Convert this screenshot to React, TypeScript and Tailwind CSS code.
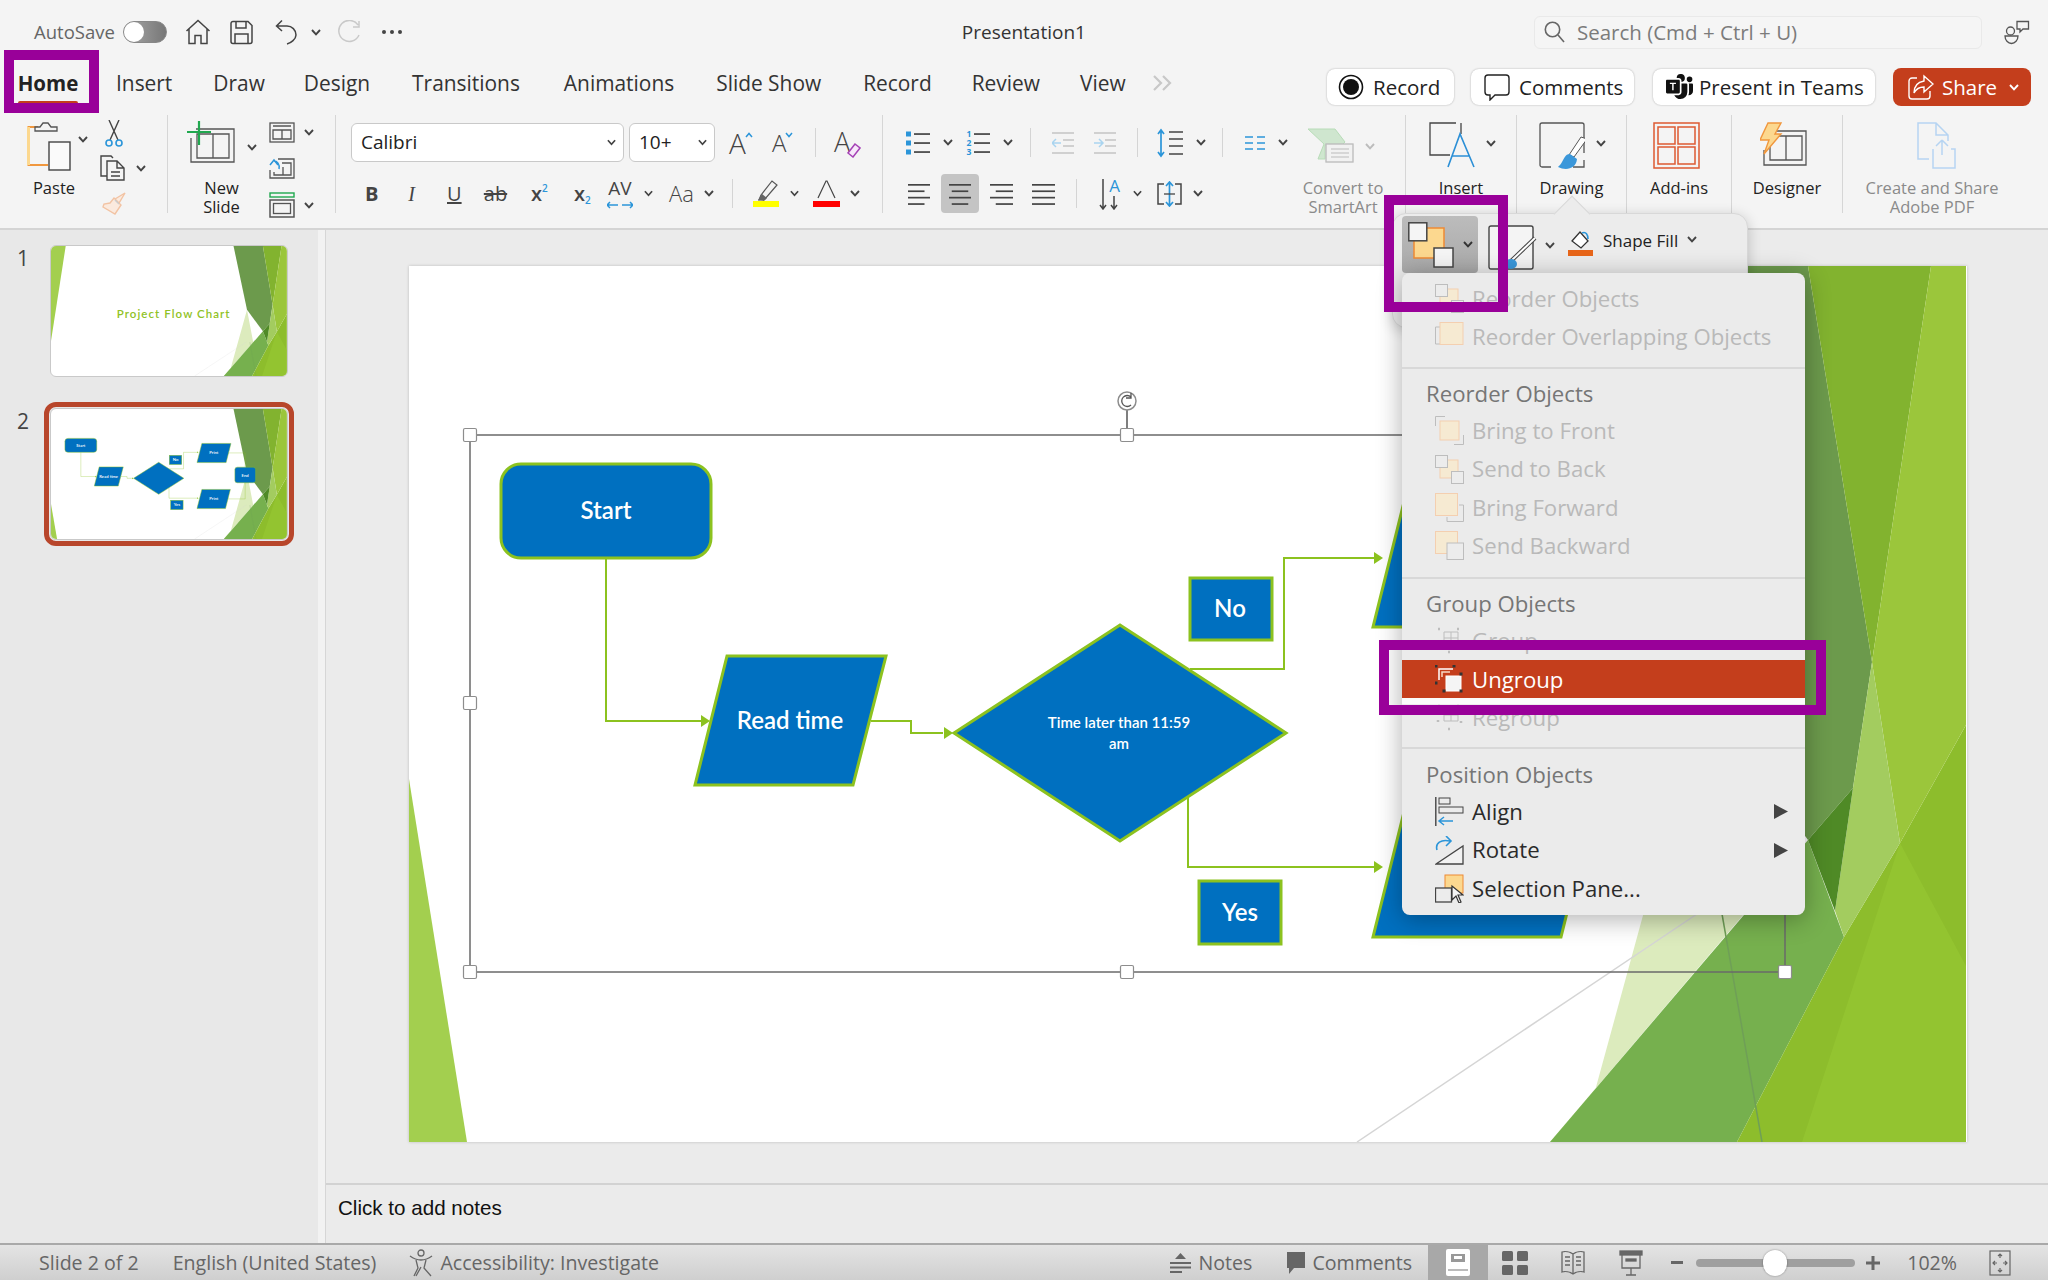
import type { ReactNode } from 'react'
import { BsMicrosoftTeams } from 'react-icons/bs'

const INK = '#444'
const BLUE = '#2b95d9'
const ORANGE = '#f0973e'
const PEACH = '#fcd88f'

// ─── Small shared bits ────────────────────────────────────────────────────────

function Chev({ color = '#444', w = 10 }: { color?: string; w?: number }) {
  return (
    <svg width={w} height="7" viewBox="0 0 10 7" className="shrink-0">
      <path d="M1 1l4 4.4L9 1" fill="none" stroke={color} strokeWidth="1.9" />
    </svg>
  )
}

function RowDiv() {
  return <div className="w-px h-[29px] bg-[#d4d4d4] shrink-0" />
}

function GroupDiv() {
  return <div className="w-px h-[98px] mt-[3px] bg-[#d6d6d6] shrink-0" />
}

function Lines({ w = 22, rows, align = 'l' }: { w?: number; rows: number[]; align?: 'l' | 'c' | 'r' }) {
  return (
    <svg width={w} height="24" viewBox={`0 0 ${w} 24`} className="shrink-0">
      {rows.map((len, i) => {
        const l = len * w
        const x = align === 'l' ? 0 : align === 'r' ? w - l : (w - l) / 2
        return <rect key={i} x={x} y={2 + i * 6.4} width={l} height="1.7" fill="#444" />
      })}
    </svg>
  )
}

// ─── Title bar ────────────────────────────────────────────────────────────────

function TitleBar() {
  return (
    <div className="relative h-[50px] pt-[14px] flex items-center shrink-0">
      <span className="ml-[34px] text-[18.5px] text-[#666]">AutoSave</span>
      <div className="ml-[8px] w-[44px] h-[22px] rounded-full bg-linear-to-r from-[#aaa] to-[#777] border border-[#888] flex items-center">
        <div className="w-[20px] h-[20px] rounded-full bg-white" />
      </div>
      <svg width="26" height="26" viewBox="0 0 26 26" className="ml-[18px]" fill="none" stroke={INK} strokeWidth="1.5">
        <path d="M1.5 12L13 1.5 24.5 12M4 10v14.5h6v-8h6v8h6V10" />
      </svg>
      <svg width="23" height="25" viewBox="0 0 23 25" className="ml-[19px]" fill="none" stroke={INK} strokeWidth="1.5">
        <path d="M1 3.5a2 2 0 012-2h15l4 4v16a2 2 0 01-2 2H3a2 2 0 01-2-2zM6 2v6h10V2M5 23v-9h13v9" />
      </svg>
      <svg width="23" height="26" viewBox="0 0 23 26" className="ml-[22px]" fill="none" stroke={INK} strokeWidth="1.5">
        <path d="M7 1.5L1.5 7 7 12M2 7h10a9 9 0 019 9c0 4-5 8-9 9" />
      </svg>
      <div className="ml-[13px]"><Chev /></div>
      <svg width="23" height="25" viewBox="0 0 23 25" className="ml-[17px]" fill="none" stroke="#c9c9c9" strokeWidth="1.5">
        <path d="M20 5A10.5 10.5 0 1021 15M21 1v6h-6" />
      </svg>
      <div className="ml-[21px] flex gap-[4px]">
        <i className="w-[4px] h-[4px] rounded-full bg-[#444]" />
        <i className="w-[4px] h-[4px] rounded-full bg-[#444]" />
        <i className="w-[4px] h-[4px] rounded-full bg-[#444]" />
      </div>
      <span className="ml-[560px] text-[19px] text-[#333]">Presentation1</span>
      <div className="ml-[448px] w-[448px] h-[33px] rounded-[6px] border border-[#e9e9e9] bg-[#f5f5f5] flex items-center pl-[9px]">
        <svg width="21" height="22" viewBox="0 0 21 22" fill="none" stroke="#666" strokeWidth="1.6">
          <circle cx="8.5" cy="8.5" r="7.2" />
          <path d="M14 14l6 7" />
        </svg>
        <span className="ml-[12px] text-[20.5px] font-medium text-[#7b7b7b]">Search (Cmd + Ctrl + U)</span>
      </div>
      <svg width="26" height="25" viewBox="0 0 26 25" className="ml-[22px]" fill="none" stroke="#555" strokeWidth="1.3">
        <circle cx="6.5" cy="11" r="4" />
        <path d="M1 16h13c0 4-3 7.5-6.500 7.500S1 20 1 16zM13 1.500h11.500v7.500H19l-3 3V9h-3z" />
      </svg>
    </div>
  )
}

// ─── Tabs ─────────────────────────────────────────────────────────────────────

const TABS: [string, string][] = [
  ['Insert', 'ml-[38px]'],
  ['Draw', 'ml-[41px]'],
  ['Design', 'ml-[39px]'],
  ['Transitions', 'ml-[42px]'],
  ['Animations', 'ml-[44px]'],
  ['Slide Show', 'ml-[42px]'],
  ['Record', 'ml-[42px]'],
  ['Review', 'ml-[40px]'],
  ['View', 'ml-[40px]'],
]

function Pill({ cls, children }: { cls: string; children: ReactNode }) {
  return (
    <div className={`h-[36px] rounded-[8px] bg-white shadow-[0_0_2px_rgba(0,0,0,0.3)] flex items-center text-[20.5px] text-[#222] shrink-0 ${cls}`}>
      {children}
    </div>
  )
}

function TabRow() {
  return (
    <div className="h-[62px] flex items-start shrink-0">
      <div className="ml-[18px] w-[60px] h-[56px] flex flex-col items-center relative">
        <span className="mt-[20px] text-[20.5px] leading-[26px] font-bold text-[#222]">Home</span>
        <div className="absolute top-[51px] left-0 w-full h-[5px] rounded-t-[2px] bg-[#c43e1c]" />
      </div>
      {TABS.map(([t, m]) => (
        <span key={t} className={`${m} mt-[20px] text-[20.9px] leading-[26px] text-[#333]`}>{t}</span>
      ))}
      <svg width="20" height="16" viewBox="0 0 20 16" className="ml-[26px] mt-[25px]" fill="none" stroke="#c8c8c8" strokeWidth="2.2">
        <path d="M2 1l7 7-7 7M11 1l7 7-7 7" />
      </svg>
      <div className="ml-auto mr-[17px] mt-[18px] flex items-center">
        <Pill cls="w-[127px] pl-[11px]">
          <svg width="26" height="26" viewBox="0 0 26 26"><circle cx="13" cy="13" r="11.500" fill="none" stroke="#111" strokeWidth="1.6" /><circle cx="13" cy="13" r="8" fill="#111" /></svg>
          <span className="ml-[9px]">Record</span>
        </Pill>
        <Pill cls="ml-[17px] w-[163px] pl-[13px]">
          <svg width="26" height="28" viewBox="0 0 26 28" fill="none" stroke="#222" strokeWidth="1.4"><path d="M4 2h18a3 3 0 013 3v14a3 3 0 01-3 3H11l-5 5v-5H4a3 3 0 01-3-3V5a3 3 0 013-3z" /></svg>
          <span className="ml-[9px]">Comments</span>
        </Pill>
        <Pill cls="ml-[19px] w-[222px] pl-[13px]">
          <BsMicrosoftTeams size={27} color="#111" />
          <span className="ml-[6px]">Present in Teams</span>
        </Pill>
        <div className="ml-[18px] w-[138px] h-[38px] rounded-[8px] bg-[#c43e1c] flex items-center pl-[15px] text-white text-[20.5px] font-medium">
          <svg width="26" height="26" viewBox="0 0 26 26" fill="none" stroke="#fff" strokeWidth="1.4">
            <path d="M9 4H4a3 3 0 00-3 3v15a3 3 0 003 3h15a3 3 0 003-3v-5M16 2l9 8-9 8v-5c-5 0-8 2-10 6 0-7 4-11 10-12z" />
          </svg>
          <span className="ml-[8px]">Share</span>
          <span className="ml-[11px]"><Chev color="#fff" w={12} /></span>
        </div>
      </div>
    </div>
  )
}

// ─── Ribbon icons ─────────────────────────────────────────────────────────────

function PasteIcon() {
  return (
    <svg width="44" height="50" viewBox="0 0 44 50" fill="none" className="shrink-0">
      <path d="M11 5H1.500v38H21" stroke={ORANGE} strokeWidth="2" />
      <path d="M1.500 5v38" stroke={PEACH} strokeWidth="3" />
      <path d="M8 9V5h5l3-4 5 0 3 4h6v4z" fill="#f4f4f4" stroke="#555" strokeWidth="1.3" />
      <rect x="22" y="20" width="21" height="28" fill="#fafafa" stroke="#444" strokeWidth="1.4" />
    </svg>
  )
}

function CutIcon() {
  return (
    <svg width="18" height="27" viewBox="0 0 18 27" fill="none" className="shrink-0">
      <path d="M4 0l9 20M14 0L5 20" stroke="#444" strokeWidth="1.4" />
      <circle cx="4" cy="23" r="3" stroke={BLUE} strokeWidth="1.6" />
      <circle cx="14" cy="23" r="3" stroke={BLUE} strokeWidth="1.6" />
    </svg>
  )
}

function CopyIcon() {
  return (
    <svg width="25" height="26" viewBox="0 0 25 26" fill="none" stroke="#444" strokeWidth="1.4" className="shrink-0">
      <path d="M7 21H1V1h10l2 2" />
      <path d="M7 6h10l7 7v12H7zM17 6v7h7M11 17h9M11 21h9" />
    </svg>
  )
}

function BrushIcon() {
  return (
    <svg width="25" height="23" viewBox="0 0 25 23" fill="none" stroke="#f2c3a3" strokeWidth="1.4" className="shrink-0">
      <path d="M14 7L24 1l-6 10zM13 6l7 7-6 9-12-7 1-3 6-1z" fill="#fbeade" />
      <path d="M18 12l-4-4" stroke="#ccc" />
    </svg>
  )
}

function NewSlideIcon() {
  return (
    <svg width="48" height="44" viewBox="0 0 48 44" fill="none" className="shrink-0">
      <path d="M9 9h38v33H4V18M10 14h32v24H10zM26 14v24" stroke="#555" strokeWidth="1.300" />
      <path d="M12 1v24M0 12h24" stroke="#20a84f" strokeWidth="2.200" />
    </svg>
  )
}

function LayoutIcon() {
  return (
    <svg width="26" height="21" viewBox="0 0 26 21" fill="none" stroke="#555" strokeWidth="1.3" className="shrink-0">
      <rect x="1" y="1" width="24" height="19" />
      <path d="M4 4h18M4 8h18v9H4zM13 8v9" />
    </svg>
  )
}

function ResetIcon() {
  return (
    <svg width="26" height="21" viewBox="0 0 26 21" fill="none" stroke="#555" strokeWidth="1.3" className="shrink-0">
      <path d="M9 1h16v19H1v-8M13 5h9v12H5v-3M14 9v8" />
      <path d="M1 7l4-5 4 5M5 3c3 0 6 3 5 8" stroke={BLUE} strokeWidth="1.500" />
    </svg>
  )
}

function SectionIcon() {
  return (
    <svg width="26" height="26" viewBox="0 0 26 26" fill="none" className="shrink-0">
      <rect x="1" y="1" width="24" height="4" stroke="#20a84f" strokeWidth="1.400" />
      <rect x="1" y="8" width="24" height="17" stroke="#555" strokeWidth="1.500" />
      <rect x="4.500" y="11.500" width="17" height="10" stroke="#555" strokeWidth="1.300" />
    </svg>
  )
}

function FontAInc({ up }: { up: boolean }) {
  return (
    <div className={`flex items-start font-light text-[#444] shrink-0 ${up ? 'w-[26px] text-[28px]' : 'w-[25px] text-[24px]'} leading-[30px]`}>
      <span>A</span>
      <svg width="8" height="6" viewBox="0 0 8 6" className="mt-[4px] -ml-[1px]" fill="none" stroke={BLUE} strokeWidth="1.500">
        <path d={up ? 'M1 5l3-3.500L7 5' : 'M1 1l3 3.500L7 1'} />
      </svg>
    </div>
  )
}

function ClearIcon() {
  return (
    <div className="relative w-[27px] h-[30px] shrink-0">
      <span className="absolute left-0 top-0 text-[27px] leading-[28px] font-light text-[#444]">A</span>
      <svg width="15" height="15" viewBox="0 0 15 15" className="absolute right-0 bottom-0" fill="none" stroke="#a542b6" strokeWidth="1.500">
        <path d="M9 1l5 4-7 9-5-4z" fill="#f7e8fa" />
      </svg>
    </div>
  )
}

function BulletIcon({ numbered }: { numbered?: boolean }) {
  return (
    <svg width="24" height="30" viewBox="0 0 24 30" className="shrink-0">
      {[6, 15, 24].map((y, i) => (
        <g key={y}>
          {numbered ? (
            <text x="0.500" y={y + 3} fontSize="8.500" fontWeight="700" fill={BLUE} fontFamily="Open Sans, sans-serif">{i + 1}</text>
          ) : (
            <rect x="0" y={y - 2.500} width="5" height="5" fill={BLUE} />
          )}
          <rect x="8" y={y - 0.800} width="16" height="1.700" fill="#444" />
        </g>
      ))}
    </svg>
  )
}

function IndentIcon({ inc }: { inc?: boolean }) {
  return (
    <svg width="22" height="24" viewBox="0 0 22 24" fill="none" className="shrink-0">
      <path d="M0 2h22M11 9h11M11 15h11M0 22h22" stroke="#c3c3c3" strokeWidth="1.700" />
      <path d={inc ? 'M0 12h9M5 8l4 4-4 4' : 'M9 12H0M4 8l-4 4 4 4'} stroke="#a9d4ef" strokeWidth="1.500" />
    </svg>
  )
}

function LineSpacingIcon() {
  return (
    <svg width="26" height="30" viewBox="0 0 26 30" fill="none" className="shrink-0">
      <path d="M4 2v26M1 6l3-4 3 4M1 24l3 4 3-4" stroke={BLUE} strokeWidth="1.700" />
      <path d="M12 4h14M12 11h14M12 18h14M12 26h14" stroke="#444" strokeWidth="1.700" />
    </svg>
  )
}

function ColumnsIcon() {
  return (
    <svg width="20" height="14" viewBox="0 0 20 14" className="shrink-0" stroke={BLUE} strokeWidth="1.700">
      <path d="M0 1h8M12 1h8M0 7h8M12 7h8M0 13h8M12 13h8" />
    </svg>
  )
}

function SmartArtIcon() {
  return (
    <svg width="46" height="35" viewBox="0 0 46 35" fill="none" className="shrink-0">
      <path d="M0 1h27l10 13-3 3H17v14H10l6-15z" fill="#cfe6cf" stroke="#b8dcb8" strokeWidth="1" />
      <rect x="18" y="16" width="27" height="18" fill="#f1f1f1" stroke="#bbb" strokeWidth="1.300" />
      <path d="M23 21h18M23 25h18M23 29h18" stroke="#bbb" strokeWidth="1" />
    </svg>
  )
}

function TextDirIcon() {
  return (
    <div className="relative w-[21px] h-[32px] shrink-0">
      <span className="absolute right-0 -top-[3px] text-[17px] leading-[22px] text-[#2b95d9]">A</span>
      <svg width="21" height="32" viewBox="0 0 21 32" fill="none" stroke="#444" strokeWidth="1.500" className="absolute inset-0">
        <path d="M4 1v30M1 27l3 4 3-4M15 18v13M12 27l3 4 3-4" />
      </svg>
    </div>
  )
}

function VAlignIcon() {
  return (
    <svg width="25" height="26" viewBox="0 0 25 26" fill="none" className="shrink-0">
      <path d="M7 3H1v20h6M18 3h6v20h-6" stroke="#444" strokeWidth="1.500" />
      <path d="M12.500 1v24M9 5l3.500-4L16 5M9 21l3.500 4L16 21" stroke={BLUE} strokeWidth="1.700" />
      <path d="M7 13h11" stroke="#444" strokeWidth="1.300" />
    </svg>
  )
}

function InsertIcon() {
  return (
    <svg width="46" height="46" viewBox="0 0 46 46" fill="none" className="shrink-0">
      <path d="M27 1H1v32h20M32 1v11" stroke="#444" strokeWidth="1.300" />
      <path d="M19 45l12-33 14 33M23 34h18" stroke="#2b8fd6" strokeWidth="1.600" />
    </svg>
  )
}

function DrawingIcon() {
  return (
    <svg width="46" height="50" viewBox="0 0 46 50" fill="none" className="shrink-0">
      <path d="M12 45H3a2 2 0 01-2-2V3a2 2 0 012-2h40a2 2 0 012 2v28M45 38v7H34" stroke="#555" strokeWidth="1.300" />
      <path d="M35 35L48 17 42 15 30 33z" fill="#fff" stroke="#555" strokeWidth="1" />
      <path d="M31 32c-5 0-6 5-8 8-1 2-3 4-4 5 8 4 18 2 19-8z" fill="#3a97da" />
    </svg>
  )
}

function AddInsIcon() {
  return (
    <svg width="47" height="47" viewBox="0 0 47 47" fill="none" stroke="#dd5a32" strokeWidth="1.500" className="shrink-0">
      <rect x="1" y="1" width="45" height="45" />
      <rect x="5" y="5" width="17" height="17" />
      <rect x="25" y="5" width="17" height="17" />
      <rect x="5" y="25" width="17" height="17" />
      <rect x="25" y="25" width="17" height="17" />
    </svg>
  )
}

function DesignerIcon() {
  return (
    <svg width="47" height="44" viewBox="0 0 47 44" fill="none" className="shrink-0">
      <path d="M14 9h32v34H4V28M10 14h32v24H10zM12 14h30M26 14v24" stroke="#555" strokeWidth="1.300" />
      <path d="M8 1h13l-6 11h6L4 32l5-14H0z" fill={PEACH} stroke={ORANGE} strokeWidth="1.400" />
    </svg>
  )
}

function AdobeIcon() {
  return (
    <svg width="39" height="47" viewBox="0 0 39 47" fill="none" stroke="#b6d4f2" strokeWidth="1.500" className="shrink-0">
      <path d="M12 37H1V1h18l12 12v6M19 1v12h12M25 18l-6 6M25 18l6 6M25 18v15M16 27v19h22V27h-4" />
    </svg>
  )
}

function LabelledIcon({ w, pad, icon, chev, label, gray }: { w: string; pad: string; icon: ReactNode; chev?: string; label: string[]; gray?: boolean }) {
  return (
    <div className={`${w} flex flex-col shrink-0`}>
      <div className={`h-[56px] flex items-start ${pad}`}>
        {icon}
        {chev && <span className={chev}><Chev /></span>}
      </div>
      <div className={`text-center text-[16.5px] leading-[19px] ${gray ? 'text-[#8a8a8a]' : 'text-[#222]'}`}>
        {label.map(l => <div key={l}>{l}</div>)}
      </div>
    </div>
  )
}

// ─── Ribbon ───────────────────────────────────────────────────────────────────

function FontRows() {
  return (
    <div className="w-[546px] shrink-0 flex flex-col">
      <div className="h-[39px] flex items-center">
        <div className="ml-[15px] w-[273px] h-[39px] rounded-[6px] bg-white border border-[#c9c9c9] flex items-center pl-[9px] pr-[7px] text-[19px] text-[#222]">
          <span className="flex-1">Calibri</span>
          <Chev w={9} />
        </div>
        <div className="ml-[5px] w-[86px] h-[39px] rounded-[6px] bg-white border border-[#c9c9c9] flex items-center pl-[9px] pr-[7px] text-[19px] text-[#222]">
          <span className="flex-1">10+</span>
          <Chev w={9} />
        </div>
        <div className="ml-[14px]"><FontAInc up /></div>
        <div className="ml-[17px]"><FontAInc up={false} /></div>
        <div className="ml-[18px]"><RowDiv /></div>
        <div className="ml-[18px]"><ClearIcon /></div>
      </div>
      <div className="h-[39px] mt-[12px] flex items-center text-[#444]">
        <span className="ml-[29px] w-[11px] text-center text-[20px] font-bold">B</span>
        <span className="ml-[31px] w-[9px] text-center text-[20px] italic font-['Liberation_Serif',serif]">I</span>
        <span className="ml-[31px] w-[12px] text-center text-[20px] underline">U</span>
        <span className="ml-[24px] w-[25px] text-center text-[20px] line-through">ab</span>
        <span className="ml-[23px] w-[17px] text-[20px] font-semibold">x<sup className="text-[10px] text-[#2b95d9] -top-[9px]">2</sup></span>
        <span className="ml-[26px] w-[17px] text-[20px] font-semibold">x<sub className="text-[10px] text-[#2b95d9] -bottom-[3px]">2</sub></span>
        <div className="ml-[16px] w-[26px] h-[30px] relative shrink-0">
          <span className="absolute left-0 -top-[3px] text-[19px] leading-[24px] w-full text-center">AV</span>
          <svg width="26" height="8" viewBox="0 0 26 8" className="absolute left-0 bottom-0" fill="none" stroke={BLUE} strokeWidth="1.500"><path d="M0 4h11M3 1L0 4l3 3M15 4h11M23 1l3 3-3 3" /></svg>
        </div>
        <div className="ml-[11px]"><Chev w={9} /></div>
        <span className="ml-[16px] w-[26px] text-[22px] font-light">Aa</span>
        <div className="ml-[9px]"><Chev /></div>
        <div className="ml-[18px]"><RowDiv /></div>
        <svg width="26" height="27" viewBox="0 0 26 27" fill="none" className="ml-[20px] shrink-0">
          <path d="M8 15L19 1l5 4-12 14-6 1z" stroke="#555" strokeWidth="1.200" fill="#f4f4f4" />
          <path d="M5 20l4-6 5 4-3 3z" fill="#666" />
          <rect x="0" y="21" width="26" height="6" fill="#ffff00" />
        </svg>
        <div className="ml-[11px]"><Chev w={9} /></div>
        <svg width="27" height="27" viewBox="0 0 27 27" fill="none" className="ml-[14px] shrink-0">
          <path d="M5 18L13 1l1 0 8 17" stroke="#444" strokeWidth="1.200" />
          <rect x="0" y="21" width="27" height="6" fill="#ff0000" />
        </svg>
        <div className="ml-[10px]"><Chev /></div>
      </div>
    </div>
  )
}

function ParagraphRows() {
  return (
    <div className="w-[417px] shrink-0 flex flex-col">
      <div className="h-[39px] flex items-center">
        <div className="ml-[23px]"><BulletIcon /></div>
        <div className="ml-[13px]"><Chev /></div>
        <div className="ml-[13px]"><BulletIcon numbered /></div>
        <div className="ml-[13px]"><Chev /></div>
        <div className="ml-[17px]"><RowDiv /></div>
        <div className="ml-[21px]"><IndentIcon /></div>
        <div className="ml-[20px]"><IndentIcon inc /></div>
        <div className="ml-[21px]"><RowDiv /></div>
        <div className="ml-[19px]"><LineSpacingIcon /></div>
        <div className="ml-[13px]"><Chev /></div>
        <div className="ml-[16px]"><RowDiv /></div>
        <div className="ml-[22px]"><ColumnsIcon /></div>
        <div className="ml-[13px]"><Chev /></div>
      </div>
      <div className="h-[39px] mt-[12px] flex items-center">
        <div className="ml-[25px]"><Lines rows={[1, 0.75, 1, 0.75]} /></div>
        <div className="ml-[11px] w-[38px] h-[39px] rounded-[4px] bg-[#c4c4c4] flex items-center justify-center"><Lines rows={[1, 0.75, 1, 0.75]} align="c" /></div>
        <div className="ml-[11px]"><Lines w={23} rows={[1, 0.75, 1, 0.75]} align="r" /></div>
        <div className="ml-[19px]"><Lines w={23} rows={[1, 1, 1, 1]} /></div>
        <div className="ml-[21px]"><RowDiv /></div>
        <div className="ml-[22px]"><TextDirIcon /></div>
        <div className="ml-[13px]"><Chev w={9} /></div>
        <div className="ml-[15px]"><VAlignIcon /></div>
        <div className="ml-[11px]"><Chev /></div>
      </div>
    </div>
  )
}

function Ribbon() {
  return (
    <div className="h-[118px] border-b-2 border-[#d4d4d4] flex shrink-0">
      {/* clipboard */}
      <div className="w-[167px] flex shrink-0">
        <div className="w-[88px] shrink-0 flex flex-col">
          <div className="h-[66px] pt-[10px] pl-[27px] flex items-start">
            <PasteIcon />
            <span className="ml-[7px] mt-[14px]"><Chev /></span>
          </div>
          <div className="text-center text-[16.5px] leading-[19px] text-[#222] pl-[20px]">Paste</div>
        </div>
        <div className="flex flex-col pt-[8px]">
          <div className="ml-[17px]"><CutIcon /></div>
          <div className="mt-[8px] ml-[12px] flex items-center">
            <CopyIcon />
            <span className="ml-[11px]"><Chev /></span>
          </div>
          <div className="mt-[11px] ml-[13px]"><BrushIcon /></div>
        </div>
      </div>
      <GroupDiv />
      {/* slides */}
      <div className="w-[167px] flex shrink-0">
        <div className="ml-[19px] w-[69px] shrink-0 flex flex-col">
          <div className="h-[66px] pt-[8px] flex items-start">
            <NewSlideIcon />
            <span className="ml-[12px] mt-[24px]"><Chev /></span>
          </div>
          <div className="text-center text-[16.5px] leading-[19px] text-[#222]">New<br />Slide</div>
        </div>
        <div className="ml-[13px] flex flex-col pt-[10px]">
          <div className="flex items-center"><LayoutIcon /><span className="ml-[9px]"><Chev /></span></div>
          <div className="mt-[15px]"><ResetIcon /></div>
          <div className="mt-[13px] flex items-center"><SectionIcon /><span className="ml-[9px]"><Chev /></span></div>
        </div>
      </div>
      <GroupDiv />
      {/* font + paragraph */}
      <div className="flex flex-col pt-[11px]"><FontRows /></div>
      <GroupDiv />
      <div className="flex flex-col pt-[11px]"><ParagraphRows /></div>
      <div className="w-[105px] shrink-0 flex flex-col pt-[16px]">
        <div className="h-[50px] pl-[8px] flex items-start">
          <SmartArtIcon />
          <span className="ml-[11px] mt-[15px]"><Chev color="#bcbcbc" /></span>
        </div>
        <div className="w-[86px] text-center text-[16.5px] leading-[19px] text-[#8a8a8a]">Convert to<br />SmartArt</div>
      </div>
      <GroupDiv />
      <div className="pt-[10px]">
        <LabelledIcon w="w-[110px]" pad="pl-[23px]" icon={<InsertIcon />} chev="ml-[11px] mt-[18px]" label={['Insert']} />
      </div>
      <GroupDiv />
      <div className="pt-[10px]">
        <LabelledIcon w="w-[109px]" pad="pl-[22px]" icon={<DrawingIcon />} chev="ml-[11px] mt-[18px]" label={['Drawing']} />
      </div>
      <GroupDiv />
      <div className="pt-[10px]">
        <LabelledIcon w="w-[104px]" pad="pl-[26px]" icon={<AddInsIcon />} label={['Add-ins']} />
      </div>
      <GroupDiv />
      <div className="pt-[10px]">
        <LabelledIcon w="w-[110px]" pad="pl-[28px]" icon={<DesignerIcon />} label={['Designer']} />
      </div>
      <GroupDiv />
      <div className="pt-[10px]">
        <LabelledIcon w="w-[178px]" pad="pl-[74px]" icon={<AdobeIcon />} label={['Create and Share', 'Adobe PDF']} gray />
      </div>
    </div>
  )
}

// ─── Slide art ────────────────────────────────────────────────────────────────

function SlideArt() {
  return (
    <>
      <polygon points="1294,430 1172,876 1141,876 1335,648" fill="#dcebbd" />
      <polygon points="1205,0 1399,0 1463,396 1444,522 1399,574 1294,430" fill="#6c9a4c" />
      <polygon points="1141,876 1399,574 1435,671 1328,876" fill="#76b04e" />
      <polygon points="1328,876 1435,671 1491,577 1557,459 1557,876" fill="#8dbd2c" />
      <polygon points="1393,876 1491,577 1557,700 1557,876" fill="#97c834" opacity="0.6" />
      <polygon points="1399,0 1522,0 1463,396" fill="#82b32f" />
      <polygon points="1522,0 1557,0 1557,459 1491,577 1463,396" fill="#9bc63b" />
      <polygon points="1463,396 1491,577 1435,671 1426,645 1444,522" fill="#a3cc5f" />
      <polygon points="1444,522 1399,574 1426,645" fill="#4f8a26" />
      <line x1="948" y1="876" x2="1288" y2="648" stroke="#d5d5d5" strokeWidth="1.500" />
      <line x1="1313" y1="648" x2="1353" y2="876" stroke="#6f9f57" strokeWidth="1.500" />
    </>
  )
}

const FLOW_STROKE = '#8cc21f'

function Arrow({ x, y }: { x: number; y: number }) {
  return <polygon points={`${x - 9},${y - 6} ${x},${y} ${x - 9},${y + 6}`} fill={FLOW_STROKE} />
}

function FlowShapes() {
  const shape = { fill: '#0070c0', stroke: FLOW_STROKE, strokeWidth: 3 }
  const wire = { fill: 'none', stroke: FLOW_STROKE, strokeWidth: 2 }
  return (
    <>
      <path d="M197 292V455H292" {...wire} />
      <Arrow x={301} y={455} />
      <path d="M462 455H502V467H534" {...wire} />
      <Arrow x={544} y={467} />
      <path d="M781 403H875V292H965" {...wire} />
      <Arrow x={974} y={292} />
      <path d="M779 531V601H965" {...wire} />
      <Arrow x={974} y={601} />
      <path d="M1160 296H1282V392M1150 606H1282V497" {...wire} />
      <rect x="92" y="198" width="210" height="94" rx="20" {...shape} />
      <polygon points="318,390 477,390 444,519 286,519" {...shape} />
      <polygon points="545,467 711,359 877,467 711,575" {...shape} />
      <rect x="781" y="312" width="82" height="62" {...shape} />
      <rect x="790" y="615" width="82" height="63" {...shape} />
      <polygon points="996,232 1188,232 1156,361 964,361" {...shape} />
      <polygon points="996,542 1184,542 1152,671 964,671" {...shape} />
      <rect x="1214" y="392" width="137" height="105" rx="16" {...shape} />
    </>
  )
}

function Thumb({ second }: { second?: boolean }) {
  return (
    <svg viewBox="0 0 1558 876" preserveAspectRatio="none" className="block w-[238px] h-[132px] rounded-[6px] bg-white border border-[#c9c9c9]">
      {second ? (
        <polygon points="0,640 40,876 0,876" fill="#a3cf4f" />
      ) : (
        <polygon points="0,0 97,0 0,640" fill="#a3cf4f" />
      )}
      <SlideArt />
      {second ? (
        <>
          <FlowShapes />
          {[
            ['Start', 197, 255], ['Read time', 381, 465], ['No', 822, 353], ['Yes', 831, 657],
            ['Print', 1075, 305], ['Print', 1075, 615], ['End', 1282, 455],
          ].map(([t, x, y], i) => (
            <text key={i} x={x} y={y} fontSize="28" fontWeight="600" fill="#fff" textAnchor="middle" fontFamily="Lato, sans-serif">{t}</text>
          ))}
        </>
      ) : (
        <text x="434" y="485" fontSize="76" fontWeight="600" fill="#90c226" textLength="745" fontFamily="Lato, sans-serif">Project Flow Chart</text>
      )}
    </svg>
  )
}

function Handle({ x, y }: { x: number; y: number }) {
  return <rect x={x - 6.500} y={y - 6.500} width="13" height="13" rx="1.500" fill="#fff" stroke="#8d8d8d" strokeWidth="1.200" />
}

function FlowLabel({ cls, children }: { cls: string; children: ReactNode }) {
  return (
    <span className={`absolute -translate-x-1/2 -translate-y-1/2 text-white font-['Lato',sans-serif] font-semibold whitespace-nowrap text-center ${cls}`}>
      {children}
    </span>
  )
}

function Slide() {
  return (
    <div className="relative w-[1558px] h-[876px] bg-white shadow-[0_0_3px_rgba(0,0,0,0.2)] overflow-hidden">
      <svg viewBox="0 0 1558 876" className="absolute inset-0 w-full h-full">
        <polygon points="0,513 58,876 0,876" fill="#a3cf4f" />
        <SlideArt />
        <FlowShapes />
        <rect x="61" y="169" width="1315" height="537" fill="none" stroke="#6a6a6a" strokeWidth="1.500" />
        <path d="M718 169V144" stroke="#555" strokeWidth="1.500" />
        <circle cx="718" cy="135" r="9" fill="#fff" stroke="#8d8d8d" strokeWidth="1.500" />
        <path d="M722 131a5.500 5.500 0 100 8M722 127v5h-5" fill="none" stroke="#555" strokeWidth="1.300" />
        <Handle x={61} y={169} />
        <Handle x={718} y={169} />
        <Handle x={61} y={437} />
        <Handle x={61} y={706} />
        <Handle x={718} y={706} />
        <Handle x={1376} y={706} />
      </svg>
      <FlowLabel cls="left-[197px] top-[244px] text-[24px]">Start</FlowLabel>
      <FlowLabel cls="left-[381px] top-[454px] text-[24px]">Read time</FlowLabel>
      <FlowLabel cls="left-[710px] top-[467px] text-[15px] leading-[21px]">Time later than 11:59<br />am</FlowLabel>
      <FlowLabel cls="left-[821px] top-[342px] text-[24px]">No</FlowLabel>
      <FlowLabel cls="left-[831px] top-[646px] text-[24px]">Yes</FlowLabel>
    </div>
  )
}

// ─── Side panel, notes, status bar ────────────────────────────────────────────

function Sidebar() {
  return (
    <div className="w-[326px] flex shrink-0">
      <div className="w-[318px] bg-[#e8e8e8] pt-[15px]">
        <div className="flex">
          <span className="ml-[17px] w-[33px] text-[21px] leading-[26px] text-[#444]">1</span>
          <Thumb />
        </div>
        <div className="flex mt-[31px]">
          <span className="ml-[17px] w-[33px] text-[21px] leading-[26px] text-[#444]">2</span>
          <div className="rounded-[6px] outline-[5px] outline-offset-[1px] outline-solid outline-[#b8462b]">
            <Thumb second />
          </div>
        </div>
      </div>
      <div className="w-[7px] bg-[#f2f2f2]" />
      <div className="w-px bg-[#d6d6d6]" />
    </div>
  )
}

function StatusBar() {
  return (
    <div className="h-[37px] border-t-2 border-[#a9a9a9] bg-linear-to-b from-[#e4e4e4] to-[#cfcfcf] flex items-center text-[19.6px] text-[#666] font-['Open_Sans',sans-serif] shrink-0">
      <span className="ml-[39px]">Slide 2 of 2</span>
      <span className="ml-[34px]">English (United States)</span>
      <svg width="26" height="28" viewBox="0 0 26 28" fill="none" stroke="#666" strokeWidth="1.300" className="ml-[33px] shrink-0">
        <circle cx="12" cy="4" r="3" />
        <path d="M1 7c4 3 7 4 11 4s7-1 11-4M7 11l2 8-4 8M17 11l-2 8 7 8M12 18l-5 9" />
      </svg>
      <span className="ml-[5px]">Accessibility: Investigate</span>
      <svg width="21" height="22" viewBox="0 0 21 22" className="ml-auto shrink-0" fill="#666">
        <path d="M10.500 1L16 7H5z" />
        <rect y="10" width="21" height="2" />
        <rect y="14.500" width="21" height="2" />
        <rect y="19" width="12" height="2" />
      </svg>
      <span className="ml-[8px]">Notes</span>
      <svg width="20" height="24" viewBox="0 0 20 24" className="ml-[34px] shrink-0" fill="#666"><path d="M1 1h18v16H8l-5 6v-6H1z" /></svg>
      <span className="ml-[6px]">Comments</span>
      <div className="ml-[16px] w-[60px] h-[35px] bg-[#a8a8a8] flex items-center justify-center">
        <svg width="24" height="27" viewBox="0 0 24 27"><rect width="24" height="27" rx="2" fill="#fff" /><rect x="5" y="5" width="14" height="8" fill="#999" /><rect x="8" y="7" width="8" height="3" fill="#fff" /><rect x="2" y="20" width="20" height="2" fill="#bbb" /></svg>
      </div>
      <svg width="26" height="24" viewBox="0 0 26 24" className="ml-[14px] shrink-0" fill="#666">
        <rect width="11" height="10" rx="1.500" /><rect x="15" width="11" height="10" rx="1.500" /><rect y="14" width="11" height="10" rx="1.500" /><rect x="15" y="14" width="11" height="10" rx="1.500" />
      </svg>
      <svg width="24" height="26" viewBox="0 0 24 26" className="ml-[33px] shrink-0" fill="none" stroke="#666" strokeWidth="1.300">
        <path d="M12 4C9 2 4 1 1 2v20c3-1 8 0 11 2 3-2 8-3 11-2V2c-3-1-8 0-11 2zM12 4v20M4 7h5M4 11h5M4 15h5M15 7h5M15 11h5M15 15h5" />
      </svg>
      <svg width="24" height="26" viewBox="0 0 24 26" className="ml-[34px] shrink-0" fill="none" stroke="#666" strokeWidth="1.300">
        <rect x="1" y="1" width="22" height="4" fill="#666" />
        <path d="M3 5v13h18V5M12 18v7M7 25h10" />
        <rect x="7" y="9" width="10" height="2" fill="#666" />
      </svg>
      <span className="ml-[28px] w-[12px] h-[3px] bg-[#666] shrink-0" />
      <div className="ml-[13px] w-[159px] h-[8px] rounded-full bg-[#9f9f9f] relative shrink-0 flex items-center">
        <div className="ml-[67px] w-[24px] h-[26px] rounded-full bg-white shadow-[0_0_2px_rgba(0,0,0,0.4)]" />
      </div>
      <svg width="14" height="14" viewBox="0 0 14 14" className="ml-[11px] shrink-0" stroke="#666" strokeWidth="3"><path d="M0 7h14M7 0v14" /></svg>
      <span className="ml-[27px]">102%</span>
      <svg width="22" height="26" viewBox="0 0 22 26" className="ml-[32px] mr-[37px] shrink-0" fill="none" stroke="#666" strokeWidth="1.200">
        <rect x="1" y="1" width="20" height="24" />
        <path d="M11 4v4M9 6l2-2 2 2M11 18v4M9 20l2 2 2-2M4 13h4M6 11l-2 2 2 2M14 13h4M16 11l2 2-2 2" />
      </svg>
    </div>
  )
}

// ─── Drawing popover + arrange menu ───────────────────────────────────────────

function ArrangeIcon() {
  return (
    <svg width="46" height="46" viewBox="0 0 46 46" className="shrink-0">
      <rect x="6" y="6" width="30" height="30" fill="#fcd88f" stroke="#ee8a35" strokeWidth="1.500" />
      <rect x="0.800" y="0.800" width="18" height="18" fill="#f5f5f5" stroke="#444" strokeWidth="1.500" />
      <rect x="26" y="26" width="19" height="19" fill="#f5f5f5" stroke="#444" strokeWidth="1.500" />
    </svg>
  )
}

type MenuGlyph = 'reorder' | 'overlap' | 'front' | 'back' | 'forward' | 'backward' | 'group' | 'ungroup' | 'regroup' | 'align' | 'rotate' | 'pane'

const GR = '#bdbdbd'
const PE = '#f6ead2'
const PS = '#f4cfb0'

function MenuIcon({ kind }: { kind: MenuGlyph }) {
  let body: ReactNode = null
  if (kind === 'reorder' || kind === 'back') {
    body = (
      <>
        <rect x="5" y="5" width="18" height="18" fill={PE} stroke={PS} />
        <rect x="0.500" y="0.500" width="12" height="12" fill="#ececec" stroke={GR} />
        <rect x="16.500" y="16.500" width="12" height="12" fill="#ececec" stroke={GR} />
      </>
    )
  } else if (kind === 'overlap') {
    body = (
      <>
        <path d="M5 5H0.500V22H5" fill="none" stroke={GR} />
        <rect x="5" y="0.500" width="23" height="22" fill={PE} stroke={PS} />
      </>
    )
  } else if (kind === 'front') {
    body = (
      <>
        <path d="M0.500 10V0.500H10M28.500 19V28.500H19" fill="none" stroke={GR} />
        <rect x="5" y="5" width="19" height="19" fill={PE} stroke={PS} />
      </>
    )
  } else if (kind === 'forward') {
    body = (
      <>
        <path d="M24 12H28.500V28.500H12V24" fill="none" stroke={GR} />
        <rect x="0.500" y="0.500" width="22" height="22" fill={PE} stroke={PS} />
      </>
    )
  } else if (kind === 'backward') {
    body = (
      <>
        <rect x="0.500" y="0.500" width="22" height="22" fill={PE} stroke={PS} />
        <rect x="12" y="12" width="16.500" height="16.500" fill="#ececec" stroke={GR} />
      </>
    )
  } else if (kind === 'group' || kind === 'regroup') {
    body = (
      <>
        <rect x="3" y="3" width="23" height="23" fill="none" stroke={GR} strokeDasharray="2 17" strokeWidth="2.500" />
        <path d="M9 6h14v12H9zM9 12h14M16 6v12" fill="none" stroke={GR} />
      </>
    )
  } else if (kind === 'ungroup') {
    body = (
      <>
        <path d="M4 15V4h14" fill="none" stroke="#fff" strokeWidth="1.500" />
        <path d="M7 12V7h8" fill="none" stroke="#f6d9c4" strokeWidth="1.500" />
        <rect x="11" y="11" width="15" height="15" fill="#f5f5f5" stroke="#fff" />
        {[[1, 1], [19, 1], [1, 18], [9, 26], [26, 26], [26, 9]].map(([x, y]) => (
          <rect key={`${x}-${y}`} x={x - 1.500} y={y - 1.500} width="3" height="3" fill="#333" />
        ))}
      </>
    )
  } else if (kind === 'align') {
    body = (
      <>
        <path d="M0.800 0v29" stroke="#444" strokeWidth="1.400" />
        <rect x="4" y="1" width="11" height="6" fill="#ececec" stroke="#444" />
        <rect x="4" y="10" width="24" height="6" fill="#ececec" stroke="#444" />
        <path d="M18 24H4M9 20l-5 4 5 4" fill="none" stroke={BLUE} strokeWidth="1.500" />
      </>
    )
  } else if (kind === 'rotate') {
    body = (
      <>
        <path d="M1 28L28 10V28z" fill="#f2f2f2" stroke="#444" strokeWidth="1.300" />
        <path d="M2 14c-2-7 4-11 13-9M11 0l5 5-5 5" fill="none" stroke={BLUE} strokeWidth="1.600" />
      </>
    )
  } else {
    body = (
      <>
        <rect x="10" y="1" width="18" height="18" fill="#fcd88f" stroke="#ee8a35" />
        <rect x="0.500" y="14" width="16" height="14" fill="#ececec" stroke="#444" strokeWidth="1.300" />
        <path d="M17 12v14l4-4 3 7 2-1-3-7h5z" fill="#f4f4f4" stroke="#333" strokeWidth="1.200" />
      </>
    )
  }
  return <svg width="29" height="29" viewBox="0 0 29 29" className="shrink-0">{body}</svg>
}

function MenuRow({ icon, label, off, arrow, active }: { icon: MenuGlyph; label: string; off?: boolean; arrow?: boolean; active?: boolean }) {
  const tone = active ? 'bg-[#c43e1c] text-white' : off ? 'text-[#b9b9b9]' : 'text-[#2a2a2a]'
  return (
    <div className={`relative h-[38.300px] flex items-center pl-[33px] pr-[17px] text-[22.200px] ${tone}`}>
      <MenuIcon kind={icon} />
      <span className="ml-[8px] flex-1">{label}</span>
      {arrow && <svg width="14" height="15" viewBox="0 0 14 15"><path d="M0 0l14 7.500L0 15z" fill="#444" /></svg>}
      {active && <div className="absolute left-0 top-full w-full h-[6px] bg-white/80" />}
    </div>
  )
}

function MenuHead({ children }: { children: string }) {
  return <div className="h-[36px] flex items-center pl-[24px] text-[22.200px] text-[#767676]">{children}</div>
}

function MenuSep({ cls }: { cls: string }) {
  return <div className={`h-[2px] bg-[#d8d8d8] ${cls}`} />
}

function ArrangeMenu() {
  return (
    <div className="absolute left-[1402px] top-[273px] w-[403px] h-[642px] rounded-[8px] bg-[#ebebeb] shadow-[0_4px_26px_rgba(0,0,0,0.32)] pt-[6px] flex flex-col">
      <MenuRow icon="reorder" label="Reorder Objects" off />
      <MenuRow icon="overlap" label="Reorder Overlapping Objects" off />
      <MenuSep cls="mt-[11px] mb-[7px]" />
      <MenuHead>Reorder Objects</MenuHead>
      <MenuRow icon="front" label="Bring to Front" off />
      <MenuRow icon="back" label="Send to Back" off />
      <MenuRow icon="forward" label="Bring Forward" off />
      <MenuRow icon="backward" label="Send Backward" off />
      <MenuSep cls="mt-[12px] mb-[7px]" />
      <MenuHead>Group Objects</MenuHead>
      <MenuRow icon="group" label="Group" off />
      <MenuRow icon="ungroup" label="Ungroup" active />
      <MenuRow icon="regroup" label="Regroup" off />
      <MenuSep cls="mt-[10px] mb-[8px]" />
      <MenuHead>Position Objects</MenuHead>
      <MenuRow icon="align" label="Align" arrow />
      <MenuRow icon="rotate" label="Rotate" arrow />
      <MenuRow icon="pane" label="Selection Pane..." />
    </div>
  )
}

function DrawingPopover() {
  return (
    <div className="absolute left-[1392px] top-[213px] w-[356px] h-[115px] rounded-[14px] bg-[#ececec] border border-[#d8d8d8] shadow-[0_3px_14px_rgba(0,0,0,0.2)]">
      <div className="absolute left-[166px] -top-[13px] w-[26px] h-[26px] rotate-45 bg-[#ececec] border-l border-t border-[#d8d8d8]" />
      <div className="relative flex items-start pl-[9px] pt-[2px]">
        <div className="w-[76px] h-[57px] rounded-[4px] bg-linear-to-b from-[#bcbcbc] to-[#a9a9a9] flex items-center pl-[6px]">
          <ArrangeIcon />
          <span className="ml-[9px]"><Chev color="#333" /></span>
        </div>
        <svg width="46" height="45" viewBox="0 0 46 45" className="ml-[10px] mt-[9px] shrink-0 overflow-visible" fill="none">
          <rect x="1" y="1" width="44" height="43" rx="2" stroke="#444" strokeWidth="1.400" fill="#f4f4f4" />
          <path d="M23 36L47 13" stroke="#444" strokeWidth="4" />
          <path d="M23 36L47 13" stroke="#fff" strokeWidth="2" />
          <ellipse cx="23" cy="39" rx="6" ry="5" fill="#3a97da" />
        </svg>
        <span className="ml-[11px] mt-[26px]"><Chev /></span>
        <svg width="25" height="25" viewBox="0 0 25 25" className="ml-[13px] mt-[15px] shrink-0" fill="none">
          <path d="M4 10l8-9 8 9-7 7z" fill="#fff" stroke="#333" strokeWidth="1.300" />
          <path d="M14 2c4-2 6 2 6 6" stroke={BLUE} strokeWidth="1.600" />
          <rect x="0" y="19" width="25" height="6" fill="#e8661a" />
        </svg>
        <span className="ml-[10px] mt-[12px] text-[17px] text-[#222]">Shape Fill</span>
        <span className="ml-[9px] mt-[20px]"><Chev /></span>
      </div>
    </div>
  )
}

function Callout({ cls }: { cls: string }) {
  return <div className={`absolute border-[10px] border-[#990099] ${cls}`} />
}

export default function App() {
  return (
    <div className="relative w-[2048px] h-[1280px] overflow-hidden flex flex-col bg-[#f4f4f4] font-['Open_Sans',sans-serif]">
      <TitleBar />
      <TabRow />
      <Ribbon />
      <div className="flex-1 min-h-0 flex">
        <Sidebar />
        <div className="flex-1 flex flex-col bg-[#ebebeb]">
          <div className="flex-1 pl-[83px] pt-[36px]">
            <Slide />
          </div>
          <div className="h-[60px] border-t-2 border-[#d2d2d2] pl-[12px] pt-[11px] font-['Liberation_Sans',sans-serif] text-[20.6px] leading-[24px] text-[#111]">
            Click to add notes
          </div>
        </div>
      </div>
      <StatusBar />
      <DrawingPopover />
      <ArrangeMenu />
      <Callout cls="left-[4px] top-[50px] w-[95px] h-[63px]" />
      <Callout cls="left-[1384px] top-[195px] w-[124px] h-[117px]" />
      <Callout cls="left-[1379px] top-[640px] w-[447px] h-[75px]" />
    </div>
  )
}
